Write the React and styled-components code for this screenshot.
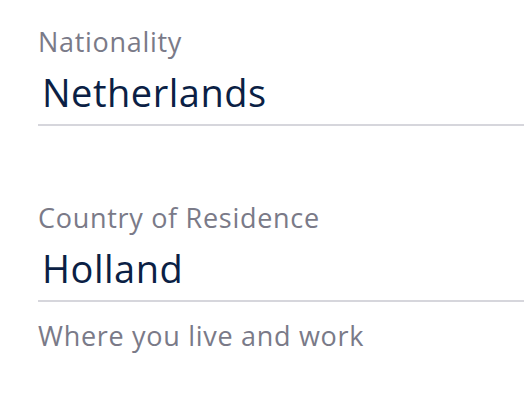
import React from "react";
import styled, {createGlobalStyle} from "styled-components";

const GlobalStyle = createGlobalStyle`
  html, body {
    margin: 0;
    padding: 0;
    background: #fff;
  }
  body {
    font-family: "Open Sans", "Liberation Sans", sans-serif;
    -webkit-font-smoothing: antialiased;
  }
`;

const Form = styled.div`
  display: flex;
  flex-direction: column;
  gap: 74px;
  padding: 24px 0 0 38px;
  width: 486px;
`;

const Field = styled.div`
  display: flex;
  flex-direction: column;
`;

const Label = styled.label`
  font-size: 27px;
  font-weight: 400;
  letter-spacing: 0.7px;
  line-height: 36px;
  color: #7a7a88;
  margin-bottom: 8px;
`;

const Value = styled.div`
  font-size: 38px;
  font-weight: 400;
  letter-spacing: 0.5px;
  line-height: 48px;
  color: #0b1f45;
  padding: 0 0 8px 4px;
  border-bottom: 2px solid #d6d6dc;
`;

const Hint = styled(Label).attrs({as: "div"})`
  margin: 16px 0 0;
`;

const TextField = ({label, value, hint}) => (
  <Field>
    <Label>{label}</Label>
    <Value>{value}</Value>
    {hint && <Hint>{hint}</Hint>}
  </Field>
);

export default function App() {
  return (
    <>
      <GlobalStyle />
      <Form>
        <TextField label="Nationality" value="Netherlands" />
        <TextField
          label="Country of Residence"
          value="Holland"
          hint="Where you live and work"
        />
      </Form>
    </>
  );
}
